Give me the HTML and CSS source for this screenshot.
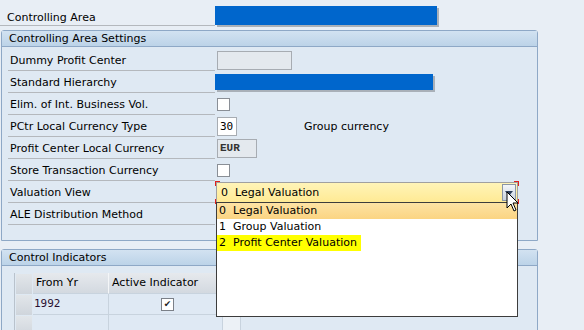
FILE: index.html
```html
<!DOCTYPE html>
<html lang="en">

<head>
    <meta charset="UTF-8">
    <title>Controlling Area</title>
    <link rel="stylesheet" href="styles.css">
</head>

<body>
    <div class="screen">
        <div class="top-row">
            <div class="label top-label">Controlling Area</div>
            <div class="blue-field top-blue"></div>
        </div>

        <!-- Controlling Area Settings -->
        <div class="group settings">
            <div class="group-head">Controlling Area Settings</div>
            <div class="group-body">
                <div class="row">
                    <div class="label">Dummy Profit Center</div>
                    <div class="input disabled dummy"></div>
                </div>
                <div class="row">
                    <div class="label">Standard Hierarchy</div>
                    <div class="blue-field hier-blue"></div>
                </div>
                <div class="row">
                    <div class="label">Elim. of Int. Business Vol.</div>
                    <div class="checkbox"></div>
                </div>
                <div class="row">
                    <div class="label">PCtr Local Currency Type</div>
                    <div class="input small">30</div>
                    <div class="side-text">Group currency</div>
                </div>
                <div class="row">
                    <div class="label">Profit Center Local Currency</div>
                    <div class="input disabled eur">EUR</div>
                </div>
                <div class="row">
                    <div class="label">Store Transaction Currency</div>
                    <div class="checkbox"></div>
                </div>
                <div class="row">
                    <div class="label">Valuation View</div>
                    <div class="combo">
                        <span>0&nbsp;&nbsp;Legal Valuation</span>
                        <div class="combo-btn"><span class="arrow"></span></div>
                        <span class="corner tl"></span>
                        <span class="corner tr"></span>
                        <span class="corner bl"></span>
                        <span class="corner br"></span>
                        <svg class="cursor" width="14" height="22" viewBox="0 0 14 22">
                            <path d="M1 1 L1 17 L5 13 L8 20 L10 19 L7 12 L12 12 Z" fill="#fff" stroke="#000" stroke-width="1" stroke-linejoin="round"/>
                        </svg>
                        <div class="list">
                            <div class="item current">0&nbsp;&nbsp;Legal Valuation</div>
                            <div class="item">1&nbsp;&nbsp;Group Valuation</div>
                            <div class="item"><span class="hit">2&nbsp;&nbsp;Profit Center Valuation</span></div>
                        </div>
                    </div>
                </div>
                <div class="row">
                    <div class="label">ALE Distribution Method</div>
                </div>
            </div>
        </div>

        <!-- Control Indicators -->
        <div class="group indicators">
            <div class="group-head">Control Indicators</div>
            <div class="group-body">
                <div class="table">
                    <div class="trow thead">
                        <div class="sel"></div>
                        <div class="cell c-year">From Yr</div>
                        <div class="cell c-active">Active Indicator</div>
                        <div class="cell c-rest"></div>
                    </div>
                    <div class="trow">
                        <div class="sel"></div>
                        <div class="cell c-year mono">1992</div>
                        <div class="cell c-active center"><span class="tick">&#10004;</span></div>
                        <div class="cell c-rest"></div>
                    </div>
                    <div class="trow">
                        <div class="sel"></div>
                        <div class="cell c-year"></div>
                        <div class="cell c-active"></div>
                        <div class="cell c-rest"></div>
                    </div>
                </div>
            </div>
        </div>
    </div>
</body>

</html>
```

FILE: styles.css
```css
/* Base */
body {
    margin: 0;
    background-color: #e8eef5;
    font-family: Tahoma, "DejaVu Sans", sans-serif;
    font-size: 11px;
    color: #000;
}

.screen {
    width: 584px;
    height: 330px;
    overflow: hidden;
}

/* Labels with underline */
.label {
    width: 205px;
    height: 21px;
    padding-left: 2px;
    margin-left: 6px;
    border-bottom: 1px solid #b4b8bd;
    line-height: 24px;
    white-space: nowrap;
}

.top-row {
    display: flex;
    height: 27px;
}

.top-label {
    margin-left: 0;
    padding-left: 7px;
    width: 208px;
    height: 25px;
    line-height: 36px;
}

/* Blue masked fields */
.blue-field {
    background-color: #0066cc;
    box-shadow: 2px 2px 0 #a9b0b8;
}

.top-blue {
    margin-top: 6px;
    width: 222px;
    height: 19px;
}

.hier-blue {
    margin-top: 3px;
    width: 218px;
    height: 16px;
}

/* Group boxes */
.group {
    margin-left: 1px;
    width: 535px;
    border: 1px solid #8ea8c6;
    border-radius: 3px 3px 0 0;
    background-color: #dfe9f3;
}

.settings {
    margin-top: 3px;
    height: 209px;
}

.indicators {
    margin-top: 8px;
    height: 90px;
}

.group-head {
    height: 15px;
    padding-left: 7px;
    line-height: 15px;
    background: linear-gradient(#d2e2f1, #bcd3e8);
    border-bottom: 1px solid #8ea8c6;
}

.settings .group-body {
    padding-top: 2px;
}

.settings .row {
    display: flex;
    align-items: flex-start;
    height: 22px;
}

/* Inputs */
.input {
    margin-left: 2px;
    margin-top: 2px;
    height: 17px;
    border: 1px solid #a7acb2;
    background-color: #fff;
    font-family: "DejaVu Sans Mono", monospace;
    font-size: 11px;
    line-height: 17px;
    padding-left: 2px;
}

.disabled {
    background-color: #e4e9ee;
}

.dummy {
    width: 71px;
}

.small {
    width: 16px;
}

.eur {
    width: 36px;
    font-family: "Liberation Mono", monospace;
    font-weight: bold;
    color: #333;
}

.side-text {
    margin-left: 67px;
    line-height: 24px;
}

.checkbox {
    margin-left: 2px;
    margin-top: 5px;
    width: 11px;
    height: 11px;
    border: 1px solid #8a8f96;
    background-color: #fff;
}

/* Dropdown */
.combo {
    position: relative;
    margin-left: 1px;
    margin-top: 1px;
    width: 296px;
    height: 19px;
    padding-left: 4px;
    border: 1px solid #a0a0a0;
    background: linear-gradient(#fff4b8, #ffea94);
    line-height: 20px;
}

.combo-btn {
    position: absolute;
    right: 1px;
    top: 1px;
    width: 14px;
    height: 17px;
    border: 1px solid #8a96a6;
    box-sizing: border-box;
    background: linear-gradient(#f3f6fa, #c8d2de);
}

.arrow {
    position: absolute;
    left: 2px;
    top: 6px;
    border-left: 4px solid transparent;
    border-right: 4px solid transparent;
    border-top: 5px solid #2c3e5a;
}

.corner {
    position: absolute;
    width: 4px;
    height: 4px;
    border-color: #e0201c;
    border-style: solid;
    border-width: 0;
}

.corner.tl { left: -2px; top: -2px; border-left-width: 1px; border-top-width: 1px; }
.corner.tr { right: -2px; top: -2px; border-right-width: 1px; border-top-width: 1px; }
.corner.bl { left: -2px; bottom: -2px; border-left-width: 1px; border-bottom-width: 1px; }
.corner.br { right: -2px; bottom: -2px; border-right-width: 1px; border-bottom-width: 1px; }

.cursor {
    position: absolute;
    left: 289px;
    top: 8px;
    z-index: 3;
}

.list {
    position: absolute;
    left: -1px;
    top: 19px;
    width: 300px;
    height: 113px;
    border: 1px solid #3c3c3c;
    background-color: #fff;
    z-index: 2;
    line-height: 16px;
}

.item {
    height: 16px;
    padding-left: 2px;
    white-space: nowrap;
}

.item.current {
    background: linear-gradient(#fde3a4, #fbd482);
}

.hit {
    display: inline-block;
    margin-left: -2px;
    padding: 0 4px 0 2px;
    background-color: #ffff00;
}

/* Table */
.table {
    margin: 7px 0 0 12px;
    width: 231px;
    border-left: 1px solid #b9c2cc;
}

.trow {
    display: flex;
    height: 21px;
}

.sel {
    width: 16px;
    margin: 1px 1px 0 1px;
    background: linear-gradient(#e2e6ea, #cfd5dc);
}

.cell {
    height: 20px;
    line-height: 20px;
    padding-left: 1px;
    border-right: 1px solid #c8d3de;
    border-bottom: 1px solid #c8d3de;
    background-color: #dfe9f4;
}

.thead .cell {
    background: linear-gradient(#e6e9ed, #d3d9e0);
    border-right-color: #f4f6f8;
    padding-left: 3px;
}

.c-year { width: 74px; }
.c-active { width: 112px; }
.c-rest { width: 16px; background-color: #ecf1f6; }

.thead .c-year { width: 72px; }
.thead .c-active { width: 110px; }

.mono {
    font-family: "DejaVu Sans Mono", monospace;
    font-size: 11px;
    color: #2a1030;
}

.center {
    text-align: center;
    padding-left: 4px;
    width: 109px;
}

.tick {
    display: inline-block;
    width: 11px;
    height: 11px;
    border: 1px solid #7b8088;
    background-color: #fff;
    font-size: 9px;
    line-height: 11px;
    vertical-align: middle;
    color: #222;
}
```
